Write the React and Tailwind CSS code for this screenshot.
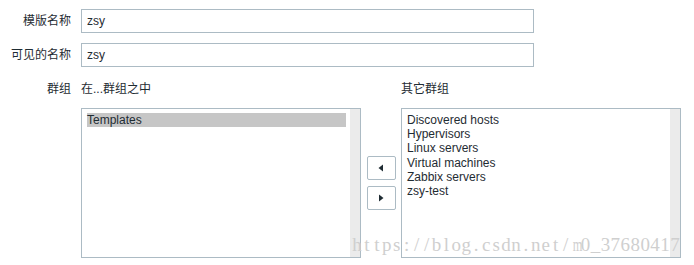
import React from 'react'

// Zabbix template form: name fields + host group picker
const otherGroups = ['Discovered hosts', 'Hypervisors', 'Linux servers', 'Virtual machines', 'Zabbix servers', 'zsy-test']
const watermark = 'https://blog.csdn.net/m0_37680417'

function ListBox({ items, selected }) {
  return (
    <div className="flex w-[280px] h-[150px] border border-[#acbbc4] bg-white">
      <div className="flex-1 pl-[5px] pr-[4px] pt-[4px] leading-[14.2px]">
        {items.map((item) => (
          <div key={item} className={item === selected ? 'bg-[#c6c6c6]' : ''}>
            {item}
          </div>
        ))}
      </div>
      <div className="w-[10px] bg-[#ebebeb]"></div>
    </div>
  )
}

function ArrowButton({ dir }) {
  return (
    <button className="flex items-center justify-center w-[29px] h-[24px] border border-[#acbbc4] rounded-[2px] bg-white">
      <svg width="6" height="8" viewBox="0 0 6 8">
        {dir === 'left' ? <path d="M5 0.5 L0.5 4 L5 7.5 Z" fill="#1f2c33" /> : <path d="M1 0.5 L5.5 4 L1 7.5 Z" fill="#1f2c33" />}
      </svg>
    </button>
  )
}

export default function App() {
  return (
    <div
      className="relative w-[694px] h-[265px] bg-white pt-[9px] text-[12px] text-[#1f2c33] overflow-hidden"
      style={{ fontFamily: '"Liberation Sans", Arial, "Noto Sans CJK SC", sans-serif' }}
    >
      <div className="flex items-center">
        <div className="w-[71px] text-right">模版名称</div>
        <input
          className="ml-[10px] w-[453px] h-[24px] border border-[#acbbc4] px-[5px] outline-none"
          defaultValue="zsy"
        />
      </div>
      <div className="flex items-center mt-[10px]">
        <div className="w-[71px] text-right">可见的名称</div>
        <input
          className="ml-[10px] w-[453px] h-[24px] border border-[#acbbc4] px-[5px] outline-none"
          defaultValue="zsy"
        />
      </div>
      <div className="flex mt-[15px]">
        <div className="w-[71px] text-right leading-[14px]">群组</div>
        <div className="ml-[10px] flex">
          <div className="flex flex-col">
            <div className="leading-[14px] mb-[12px]">在...群组之中</div>
            <ListBox items={['Templates']} selected="Templates" />
          </div>
          <div className="w-[40px] flex flex-col items-center justify-center gap-[6px] pt-[26px]">
            <ArrowButton dir="left" />
            <ArrowButton dir="right" />
          </div>
          <div className="flex flex-col">
            <div className="leading-[14px] mb-[12px]">其它群组</div>
            <ListBox items={otherGroups} />
          </div>
        </div>
      </div>
      {/* csdn watermark over the lists */}
      <div
        className="absolute left-[352px] top-[235px] flex text-[19px] leading-none text-[#cfcfcf] whitespace-nowrap"
        style={{ fontFamily: '"Liberation Serif", "DejaVu Serif", serif' }}
      >
        {watermark.split('').map((ch, i) => (
          <span key={i} className={ch === 'm' ? 'inline-block w-[9.95px] text-center scale-x-[0.65]' : 'inline-block w-[9.95px] text-center'}>
            {ch}
          </span>
        ))}
      </div>
    </div>
  )
}
